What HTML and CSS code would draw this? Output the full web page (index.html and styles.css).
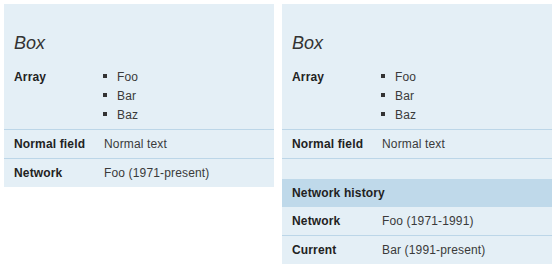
FILE: index.html
```html
<!DOCTYPE html>
<html lang="en">
<head>
<meta charset="utf-8">
<title>Infoboxes</title>
<link rel="stylesheet" href="styles.css">
</head>
<body>
<main class="boxes">
  <section class="box">
    <h2 class="box-title">Box</h2>
    <div class="row">
      <div class="label">Array</div>
      <ul class="items">
        <li>Foo</li>
        <li>Bar</li>
        <li>Baz</li>
      </ul>
    </div>
    <div class="row">
      <div class="label">Normal field</div>
      <div class="value">Normal text</div>
    </div>
    <div class="row">
      <div class="label">Network</div>
      <div class="value">Foo (1971-present)</div>
    </div>
  </section>

  <section class="box">
    <h2 class="box-title">Box</h2>
    <div class="row">
      <div class="label">Array</div>
      <ul class="items">
        <li>Foo</li>
        <li>Bar</li>
        <li>Baz</li>
      </ul>
    </div>
    <div class="row">
      <div class="label">Normal field</div>
      <div class="value">Normal text</div>
    </div>
    <div class="spacer"></div>
    <div class="group-head">Network history</div>
    <div class="row">
      <div class="label">Network</div>
      <div class="value">Foo (1971-1991)</div>
    </div>
    <div class="row">
      <div class="label">Current</div>
      <div class="value">Bar (1991-present)</div>
    </div>
  </section>
</main>
</body>
</html>
```

FILE: styles.css
```css
html, body {
  margin: 0;
  padding: 0;
  background: #ffffff;
}

body {
  font-family: "Liberation Sans", Arial, Helvetica, sans-serif;
  font-size: 12px;
  color: #333333;
}

.boxes {
  display: flex;
  align-items: flex-start;
  gap: 8px;
  padding: 4px;
}

.box {
  width: 270px;
  background: #e4eff6;
  display: flex;
  flex-direction: column;
}

.box-title {
  margin: 0;
  padding: 28px 10px 9px;
  font-size: 18px;
  line-height: 22px;
  font-weight: normal;
  font-style: italic;
  color: #333333;
}

.row {
  display: grid;
  grid-template-columns: 90px 1fr;
  padding: 5px 10px 4px;
  line-height: 19px;
  letter-spacing: 0.15px;
  border-bottom: 1px solid #bcd6e8;
}

.row:last-child {
  border-bottom: none;
}

.label {
  font-weight: bold;
  color: #222222;
}

.value {
  color: #3a3a3a;
}

.items {
  list-style: none;
  margin: 0;
  padding: 0;
  color: #3a3a3a;
}

.items li {
  display: flex;
  align-items: center;
}

.items li::before {
  content: "";
  width: 4px;
  height: 4px;
  margin-left: -1px;
  margin-right: 10px;
  margin-top: -3px;
  background: #333333;
  flex: none;
}

.spacer {
  height: 20px;
}

.group-head {
  background: #bfd9ea;
  padding: 5px 10px 4px;
  line-height: 19px;
  letter-spacing: 0.15px;
  font-weight: bold;
  color: #222222;
}
```
